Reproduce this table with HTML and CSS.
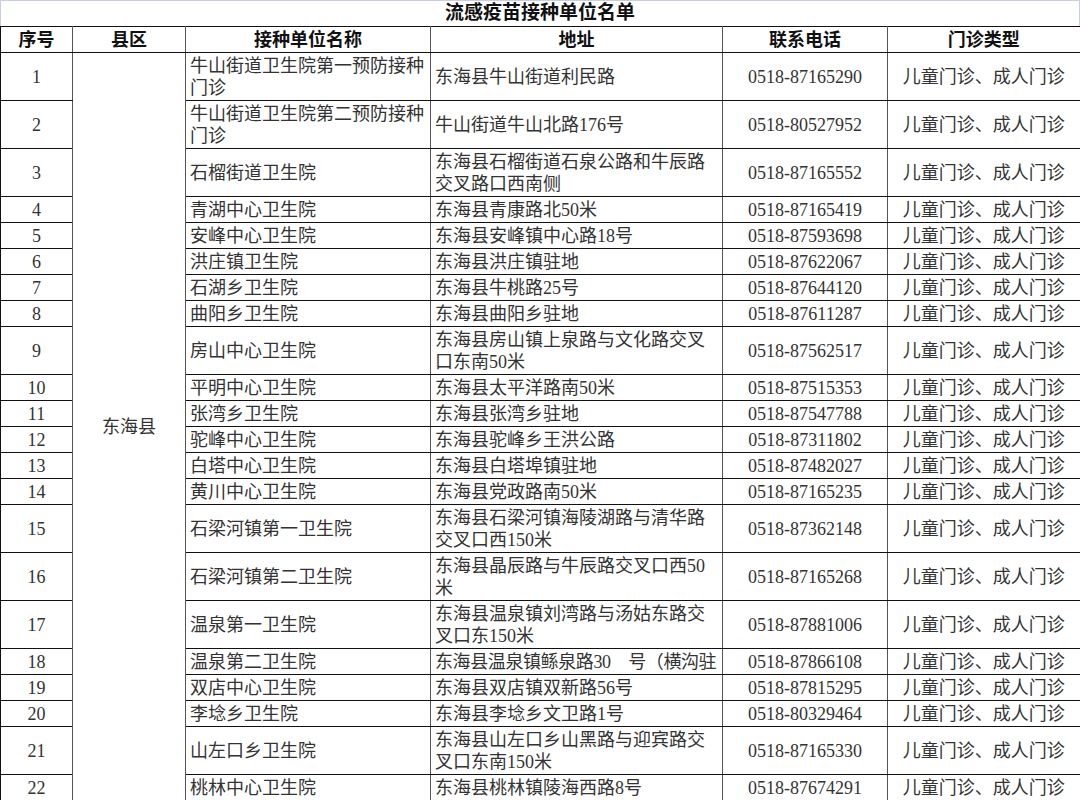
FILE: index.html
```html
<!DOCTYPE html>
<html lang="zh-CN">
<head>
<meta charset="utf-8">
<title>流感疫苗接种单位名单</title>
<link rel="stylesheet" href="styles.css">
</head>
<body>
<div class="sheet">
  <div class="title">流感疫苗接种单位名单</div>
  <table class="list">
    <colgroup>
      <col class="c-no"><col class="c-area"><col class="c-name"><col class="c-addr"><col class="c-tel"><col class="c-type">
    </colgroup>
    <thead>
      <tr class="single"><th>序号</th><th>县区</th><th>接种单位名称</th><th>地址</th><th>联系电话</th><th>门诊类型</th></tr>
    </thead>
    <tbody>
      <tr class="double"><td class="no">1</td><td class="area" rowspan="22">东海县</td><td class="name">牛山街道卫生院第一预防接种<br>门诊</td><td class="addr">东海县牛山街道利民路</td><td class="tel">0518-87165290</td><td class="type">儿童门诊、成人门诊</td></tr>
      <tr class="double"><td class="no">2</td><td class="name">牛山街道卫生院第二预防接种<br>门诊</td><td class="addr">牛山街道牛山北路176号</td><td class="tel">0518-80527952</td><td class="type">儿童门诊、成人门诊</td></tr>
      <tr class="double"><td class="no">3</td><td class="name">石榴街道卫生院</td><td class="addr">东海县石榴街道石泉公路和牛辰路<br>交叉路口西南侧</td><td class="tel">0518-87165552</td><td class="type">儿童门诊、成人门诊</td></tr>
      <tr class="single"><td class="no">4</td><td class="name">青湖中心卫生院</td><td class="addr">东海县青康路北50米</td><td class="tel">0518-87165419</td><td class="type">儿童门诊、成人门诊</td></tr>
      <tr class="single"><td class="no">5</td><td class="name">安峰中心卫生院</td><td class="addr">东海县安峰镇中心路18号</td><td class="tel">0518-87593698</td><td class="type">儿童门诊、成人门诊</td></tr>
      <tr class="single"><td class="no">6</td><td class="name">洪庄镇卫生院</td><td class="addr">东海县洪庄镇驻地</td><td class="tel">0518-87622067</td><td class="type">儿童门诊、成人门诊</td></tr>
      <tr class="single"><td class="no">7</td><td class="name">石湖乡卫生院</td><td class="addr">东海县牛桃路25号</td><td class="tel">0518-87644120</td><td class="type">儿童门诊、成人门诊</td></tr>
      <tr class="single"><td class="no">8</td><td class="name">曲阳乡卫生院</td><td class="addr">东海县曲阳乡驻地</td><td class="tel">0518-87611287</td><td class="type">儿童门诊、成人门诊</td></tr>
      <tr class="double"><td class="no">9</td><td class="name">房山中心卫生院</td><td class="addr">东海县房山镇上泉路与文化路交叉<br>口东南50米</td><td class="tel">0518-87562517</td><td class="type">儿童门诊、成人门诊</td></tr>
      <tr class="single"><td class="no">10</td><td class="name">平明中心卫生院</td><td class="addr">东海县太平洋路南50米</td><td class="tel">0518-87515353</td><td class="type">儿童门诊、成人门诊</td></tr>
      <tr class="single"><td class="no">11</td><td class="name">张湾乡卫生院</td><td class="addr">东海县张湾乡驻地</td><td class="tel">0518-87547788</td><td class="type">儿童门诊、成人门诊</td></tr>
      <tr class="single"><td class="no">12</td><td class="name">驼峰中心卫生院</td><td class="addr">东海县驼峰乡王洪公路</td><td class="tel">0518-87311802</td><td class="type">儿童门诊、成人门诊</td></tr>
      <tr class="single"><td class="no">13</td><td class="name">白塔中心卫生院</td><td class="addr">东海县白塔埠镇驻地</td><td class="tel">0518-87482027</td><td class="type">儿童门诊、成人门诊</td></tr>
      <tr class="single"><td class="no">14</td><td class="name">黄川中心卫生院</td><td class="addr">东海县党政路南50米</td><td class="tel">0518-87165235</td><td class="type">儿童门诊、成人门诊</td></tr>
      <tr class="double"><td class="no">15</td><td class="name">石梁河镇第一卫生院</td><td class="addr">东海县石梁河镇海陵湖路与清华路<br>交叉口西150米</td><td class="tel">0518-87362148</td><td class="type">儿童门诊、成人门诊</td></tr>
      <tr class="double"><td class="no">16</td><td class="name">石梁河镇第二卫生院</td><td class="addr">东海县晶辰路与牛辰路交叉口西50<br>米</td><td class="tel">0518-87165268</td><td class="type">儿童门诊、成人门诊</td></tr>
      <tr class="double"><td class="no">17</td><td class="name">温泉第一卫生院</td><td class="addr">东海县温泉镇刘湾路与汤姑东路交<br>叉口东150米</td><td class="tel">0518-87881006</td><td class="type">儿童门诊、成人门诊</td></tr>
      <tr class="single"><td class="no">18</td><td class="name">温泉第二卫生院</td><td class="addr"><div class="clip">东海县温泉镇鲧泉路30&#x3000;号（横沟驻</div></td><td class="tel">0518-87866108</td><td class="type">儿童门诊、成人门诊</td></tr>
      <tr class="single"><td class="no">19</td><td class="name">双店中心卫生院</td><td class="addr">东海县双店镇双新路56号</td><td class="tel">0518-87815295</td><td class="type">儿童门诊、成人门诊</td></tr>
      <tr class="single"><td class="no">20</td><td class="name">李埝乡卫生院</td><td class="addr">东海县李埝乡文卫路1号</td><td class="tel">0518-80329464</td><td class="type">儿童门诊、成人门诊</td></tr>
      <tr class="double"><td class="no">21</td><td class="name">山左口乡卫生院</td><td class="addr">东海县山左口乡山黑路与迎宾路交<br>叉口东南150米</td><td class="tel">0518-87165330</td><td class="type">儿童门诊、成人门诊</td></tr>
      <tr class="single"><td class="no">22</td><td class="name">桃林中心卫生院</td><td class="addr">东海县桃林镇陵海西路8号</td><td class="tel">0518-87674291</td><td class="type">儿童门诊、成人门诊</td></tr>
    </tbody>
  </table>
</div>
</body>
</html>
```
FILE: styles.css
```css
html, body {
  margin: 0;
  padding: 0;
  background: #ffffff;
}

body {
  font-family: "Liberation Serif", "Noto Sans CJK SC", serif;
  font-size: 18px;
  color: #333333;
}

.sheet {
  width: 1080px;
  height: 800px;
  overflow: hidden;
}

.title {
  box-sizing: border-box;
  height: 26px;
  border-top: 1px solid #c8cde0;
  border-left: 1px solid #c8cde0;
  border-right: 1px solid #c8cde0;
  text-align: center;
  font-size: 19px;
  font-weight: bold;
  line-height: 24px;
  color: #111111;
}

.list {
  width: 1080px;
  table-layout: fixed;
  border-collapse: collapse;
}

.c-no { width: 72px; }
.c-area { width: 113px; }
.c-name { width: 245px; }
.c-addr { width: 292px; }
.c-tel { width: 165px; }
.c-type { width: 193px; }

.list th,
.list td {
  border-top: 1px solid #111111;
  border-bottom: 1px solid #111111;
  border-left: 1px solid #555555;
  border-right: 1px solid #555555;
  padding: 0;
  white-space: nowrap;
  overflow: hidden;
  vertical-align: middle;
}

.list th {
  font-weight: bold;
  color: #111111;
  text-align: center;
  line-height: 22px;
}

.list tr:first-child th:first-child,
.list tbody tr:first-child td:first-child {
  border-left-color: #111111;
}

.list th:last-child,
.list td.type {
  border-right: 2px solid #111111;
}

.single { height: 26px; }
.double { height: 48px; }

.list td {
  line-height: 22px;
}

.no,
.area,
.tel,
.type {
  text-align: center;
}

.no {
  border-left-color: #111111 !important;
}

.name,
.addr {
  text-align: left;
  padding-left: 4px !important;
}

.clip {
  width: 287px;
  overflow: hidden;
  white-space: nowrap;
  letter-spacing: -0.4px;
}
```
